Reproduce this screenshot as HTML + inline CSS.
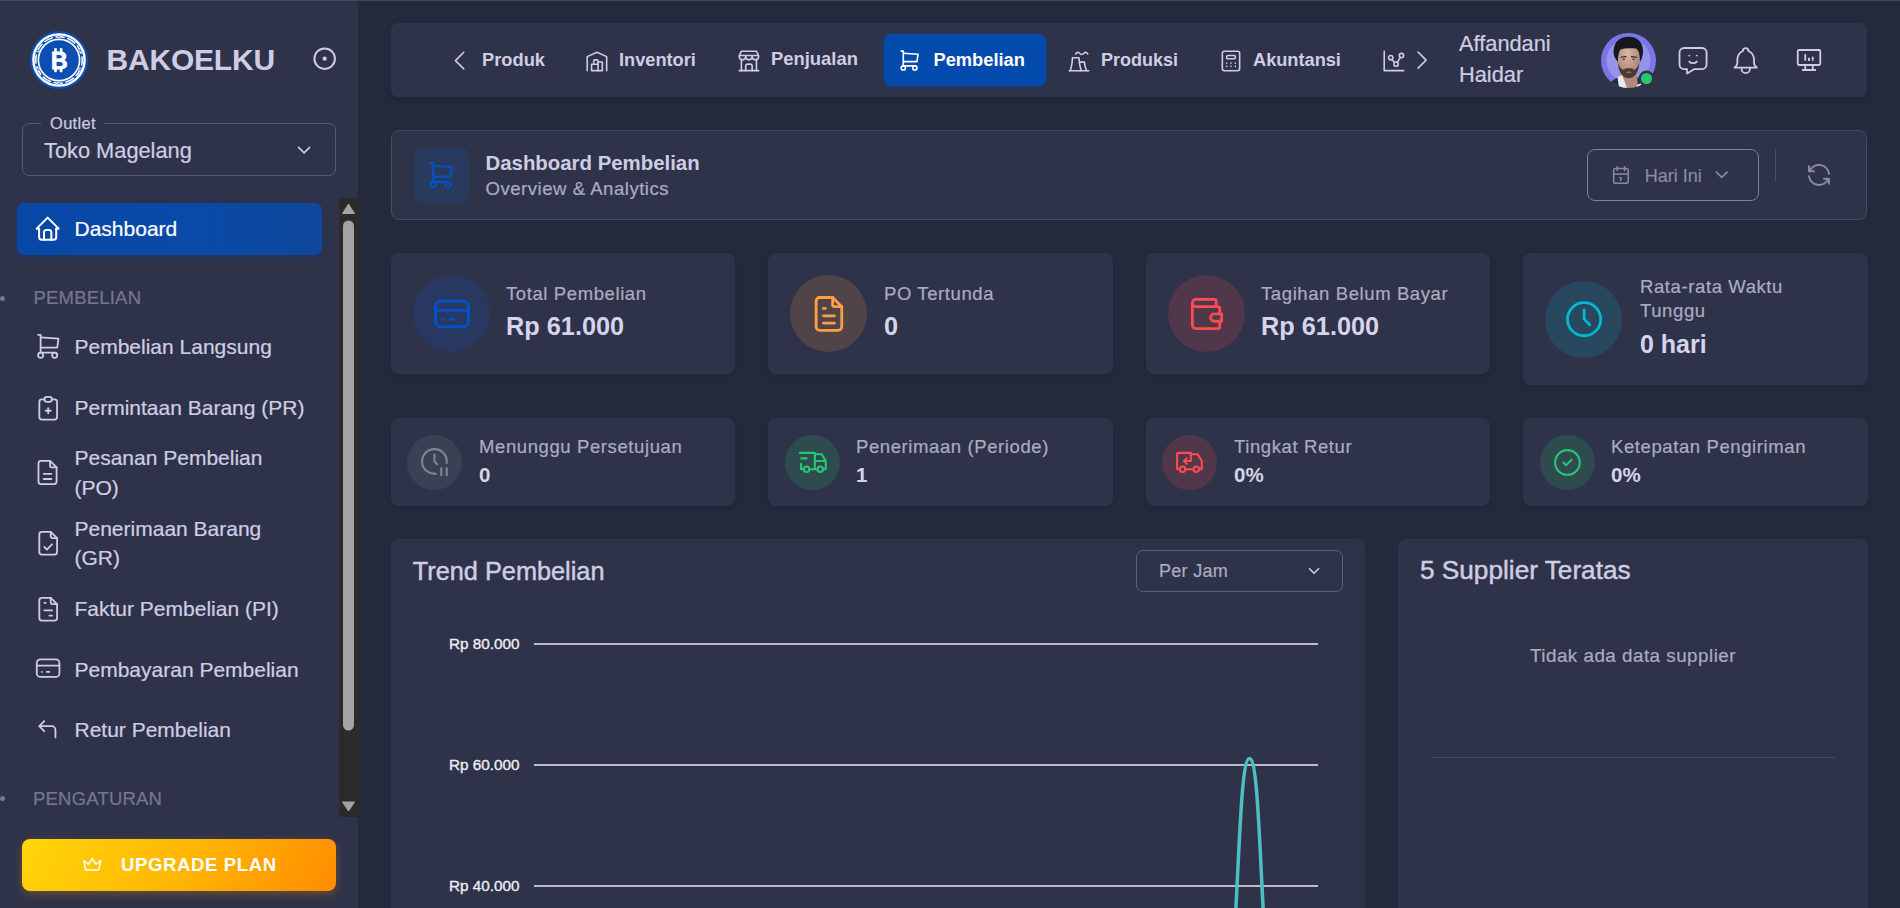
<!DOCTYPE html>
<html><head><meta charset="utf-8"><title>Dashboard Pembelian</title>
<style>
html,body{margin:0;padding:0;width:1900px;height:908px;overflow:hidden;background:#25293c;font-family:"Liberation Sans",sans-serif;}
.b{position:absolute;}
.t{position:absolute;white-space:nowrap;line-height:1;-webkit-text-stroke:0.2px currentColor;}
.ic{position:absolute;overflow:visible;}
</style></head><body>
<div class="b" style="left:0px;top:0px;width:1900px;height:1px;background:#484a47;z-index:5"></div>
<div class="b" style="left:0px;top:1px;width:358px;height:907px;background:#2f3349"></div>
<svg class="ic" style="left:29.8px;top:30.5px;width:58px;height:58px" viewBox="0 0 58 58">
<circle cx="29" cy="29" r="29" fill="#0c4eb3"/>
<circle cx="29" cy="29" r="25.6" fill="none" stroke="#ffffff" stroke-width="2.4"/>
<circle cx="29" cy="29" r="23.2" fill="none" stroke="#ffffff" stroke-width="1.5" stroke-dasharray="9.5 2.6" stroke-dashoffset="4"/>
<circle cx="29" cy="29" r="20.6" fill="none" stroke="#ffffff" stroke-width="1.6"/>
<g fill="#0c4eb3" stroke="#ffffff" stroke-width="0.9"><circle cx="29" cy="5.8" r="1.3"/><circle cx="29" cy="52.2" r="1.3"/><circle cx="7.8" cy="19.6" r="1.3"/><circle cx="50.2" cy="19.6" r="1.3"/><circle cx="7.8" cy="38.4" r="1.3"/><circle cx="50.2" cy="38.4" r="1.3"/></g>
<text x="29.4" y="37.7" text-anchor="middle" font-family="Liberation Sans" font-weight="700" font-size="23" fill="#fff" stroke="#fff" stroke-width="0.9">B</text>
<g fill="#fff"><rect x="24.2" y="17.2" width="2.6" height="4"/><rect x="29.8" y="17.2" width="2.6" height="4"/><rect x="24.2" y="37" width="2.6" height="4.2"/><rect x="29.8" y="37" width="2.6" height="4.2"/></g>
</svg>
<div class="t" style="left:106.50px;top:44.61px;font-size:30px;color:#cfcde4;font-weight:700;-webkit-text-stroke:0;letter-spacing:-0.2px;">BAKOELKU</div>
<svg class="ic" style="left:310.84px;top:45.34px;width:27.33px;height:27.33px;" viewBox="0 0 24 24" fill="none" stroke="#cfcde4" stroke-width="1.756" stroke-linecap="round" stroke-linejoin="round"><path d="M12 12m-1 0a1 1 0 1 0 2 0a1 1 0 1 0 -2 0"/><path d="M12 12m-9 0a9 9 0 1 0 18 0a9 9 0 1 0 -18 0"/></svg>
<div class="b" style="left:22px;top:123px;width:314px;height:53px;border:1px solid #575b76;border-radius:7px;box-sizing:border-box"></div>
<div class="b" style="left:41px;top:118px;width:63px;height:10px;background:#2f3349"></div>
<div class="t" style="left:50.00px;top:115.03px;font-size:16.5px;color:#cfcde4;letter-spacing:0.3px;">Outlet</div>
<div class="t" style="left:44.00px;top:139.55px;font-size:21.8px;color:#cfcde4;">Toko Magelang</div>
<svg class="ic" style="left:293.40px;top:139.40px;width:22.20px;height:22.20px;" viewBox="0 0 24 24" fill="none" stroke="#cfcde4" stroke-width="1.730" stroke-linecap="round" stroke-linejoin="round"><path d="M6 9l6 6l6 -6"/></svg>
<div class="b" style="left:17px;top:203px;width:305px;height:52px;background:linear-gradient(90deg,#0847a6 0%,#0a4aa8 60%,#0e479a 100%);border-radius:7px;box-shadow:0 2px 6px rgba(8,60,150,0.35)"></div>
<svg class="ic" style="left:33.33px;top:214.33px;width:29.33px;height:29.33px;" viewBox="0 0 24 24" fill="none" stroke="#ffffff" stroke-width="1.636" stroke-linecap="round" stroke-linejoin="round"><path d="M5 12l-2 0l9 -9l9 9l-2 0"/><path d="M5 12v7a2 2 0 0 0 2 2h10a2 2 0 0 0 2 -2v-7"/><path d="M9 21v-6a2 2 0 0 1 2 -2h2a2 2 0 0 1 2 2v6"/></svg>
<div class="t" style="left:74.50px;top:218.22px;font-size:21px;color:#ffffff;">Dashboard</div>
<div class="b" style="left:0px;top:296px;width:5px;height:5px;border-radius:50%;background:#76778e"></div>
<div class="t" style="left:33.50px;top:289.34px;font-size:18.5px;color:#76778e;letter-spacing:0.2px;">PEMBELIAN</div>
<svg class="ic" style="left:32.69px;top:331.19px;width:30.62px;height:30.62px;" viewBox="0 0 24 24" fill="none" stroke="#cfcde4" stroke-width="1.411" stroke-linecap="round" stroke-linejoin="round"><path d="M6 19m-2 0a2 2 0 1 0 4 0a2 2 0 1 0 -4 0"/><path d="M17 19m-2 0a2 2 0 1 0 4 0a2 2 0 1 0 -4 0"/><path d="M17 17h-11v-14h-2"/><path d="M6 5l14 1l-1 7h-13"/></svg>
<div class="t" style="left:74.50px;top:336.22px;font-size:21px;color:#cfcde4;">Pembelian Langsung</div>
<svg class="ic" style="left:32.80px;top:392.80px;width:30.40px;height:30.40px;" viewBox="0 0 24 24" fill="none" stroke="#cfcde4" stroke-width="1.421" stroke-linecap="round" stroke-linejoin="round"><path d="M9 5h-2a2 2 0 0 0 -2 2v12a2 2 0 0 0 2 2h10a2 2 0 0 0 2 -2v-12a2 2 0 0 0 -2 -2h-2"/><path d="M9 3m0 2a2 2 0 0 1 2 -2h2a2 2 0 0 1 2 2v0a2 2 0 0 1 -2 2h-2a2 2 0 0 1 -2 -2z"/><path d="M10 14h4"/><path d="M12 12v4"/></svg>
<div class="t" style="left:74.50px;top:397.22px;font-size:21px;color:#cfcde4;">Permintaan Barang (PR)</div>
<svg class="ic" style="left:32.47px;top:456.97px;width:31.07px;height:31.07px;" viewBox="0 0 24 24" fill="none" stroke="#cfcde4" stroke-width="1.391" stroke-linecap="round" stroke-linejoin="round"><path d="M14 3v4a1 1 0 0 0 1 1h4"/><path d="M17 21h-10a2 2 0 0 1 -2 -2v-14a2 2 0 0 1 2 -2h7l5 5v11a2 2 0 0 1 -2 2z"/><path d="M9 17h6"/><path d="M9 13h6"/></svg>
<div class="t" style="left:74.50px;top:446.62px;font-size:21px;color:#cfcde4;">Pesanan Pembelian</div>
<div class="t" style="left:74.50px;top:476.72px;font-size:21px;color:#cfcde4;">(PO)</div>
<svg class="ic" style="left:32.80px;top:527.80px;width:30.40px;height:30.40px;" viewBox="0 0 24 24" fill="none" stroke="#cfcde4" stroke-width="1.421" stroke-linecap="round" stroke-linejoin="round"><path d="M14 3v4a1 1 0 0 0 1 1h4"/><path d="M17 21h-10a2 2 0 0 1 -2 -2v-14a2 2 0 0 1 2 -2h7l5 5v11a2 2 0 0 1 -2 2z"/><path d="M9 15l2 2l4 -4"/></svg>
<div class="t" style="left:74.50px;top:517.52px;font-size:21px;color:#cfcde4;">Penerimaan Barang</div>
<div class="t" style="left:74.50px;top:547.22px;font-size:21px;color:#cfcde4;">(GR)</div>
<svg class="ic" style="left:32.80px;top:593.80px;width:30.40px;height:30.40px;" viewBox="0 0 24 24" fill="none" stroke="#cfcde4" stroke-width="1.421" stroke-linecap="round" stroke-linejoin="round"><path d="M14 3v4a1 1 0 0 0 1 1h4"/><path d="M17 21h-10a2 2 0 0 1 -2 -2v-14a2 2 0 0 1 2 -2h7l5 5v11a2 2 0 0 1 -2 2z"/><path d="M9 7l1 0"/><path d="M9 13l6 0"/><path d="M13 17l2 0"/></svg>
<div class="t" style="left:74.50px;top:597.62px;font-size:21px;color:#cfcde4;">Faktur Pembelian (PI)</div>
<svg class="ic" style="left:32.90px;top:653.40px;width:30.21px;height:30.21px;" viewBox="0 0 24 24" fill="none" stroke="#cfcde4" stroke-width="1.430" stroke-linecap="round" stroke-linejoin="round"><path d="M3 5m0 3a3 3 0 0 1 3 -3h12a3 3 0 0 1 3 3v8a3 3 0 0 1 -3 3h-12a3 3 0 0 1 -3 -3z"/><path d="M3 10l18 0"/><path d="M7 15l.01 0"/><path d="M11 15l2 0"/></svg>
<div class="t" style="left:74.50px;top:658.72px;font-size:21px;color:#cfcde4;">Pembayaran Pembelian</div>
<svg class="ic" style="left:33.17px;top:715.17px;width:29.91px;height:29.91px;" viewBox="0 0 24 24" fill="none" stroke="#cfcde4" stroke-width="1.444" stroke-linecap="round" stroke-linejoin="round"><path d="M18 18v-6a3 3 0 0 0 -3 -3h-10l4 -4m0 8l-4 -4"/></svg>
<div class="t" style="left:74.50px;top:718.62px;font-size:21px;color:#cfcde4;">Retur Pembelian</div>
<div class="b" style="left:0px;top:795.5px;width:5px;height:5px;border-radius:50%;background:#76778e"></div>
<div class="t" style="left:33.00px;top:789.84px;font-size:18.5px;color:#76778e;letter-spacing:0.2px;">PENGATURAN</div>
<div class="b" style="left:339px;top:198px;width:19px;height:619px;background:#2b2b2b"></div>
<svg class="ic" style="left:339px;top:198px;width:19px;height:619px" viewBox="0 0 19 619"><path d="M9.5 6 L15.5 15.5 L3.5 15.5 Z" fill="#a3a3a3" stroke="#a3a3a3" stroke-width="1" stroke-linejoin="round"/><path d="M9.5 613 L15.5 604 L3.5 604 Z" fill="#a3a3a3" stroke="#a3a3a3" stroke-width="1" stroke-linejoin="round"/><rect x="4" y="22.5" width="11" height="510" rx="5.5" fill="#a3a3a3"/></svg>
<div class="b" style="left:22px;top:839px;width:314px;height:52px;background:linear-gradient(120deg,#ffd60a 0%,#ffb703 50%,#ff8c00 100%);border-radius:8px;box-shadow:0 3px 8px rgba(255,150,0,0.28)"></div>
<svg class="ic" style="left:80.75px;top:853.25px;width:22.50px;height:22.50px;" viewBox="0 0 24 24" fill="none" stroke="#ffffff" stroke-width="1.600" stroke-linecap="round" stroke-linejoin="round"><path d="M12 6l4 6l5 -4l-2 10h-14l-2 -10l5 4z"/></svg>
<div class="t" style="left:121.00px;top:855.84px;font-size:18.5px;color:#ffffff;font-weight:700;-webkit-text-stroke:0;letter-spacing:0.65px;">UPGRADE PLAN</div>
<div class="b" style="left:358px;top:1px;width:1542px;height:907px;background:#25293c"></div>
<div class="b" style="left:391px;top:23px;width:1476px;height:74px;background:#2f3349;border-radius:7px;box-shadow:0 2px 8px rgba(0,0,0,0.12)"></div>
<svg class="ic" style="left:442.90px;top:43.90px;width:33.20px;height:33.20px;" viewBox="0 0 24 24" fill="none" stroke="#cfcde4" stroke-width="1.157" stroke-linecap="round" stroke-linejoin="round"><path d="M15 6l-6 6l6 6"/></svg>
<div class="t" style="left:482.00px;top:50.51px;font-size:18.3px;color:#cfcde4;font-weight:700;-webkit-text-stroke:0;">Produk</div>
<svg class="ic" style="left:583.54px;top:47.50px;width:25.92px;height:25.92px;" viewBox="0 0 24 24" fill="none" stroke="#cfcde4" stroke-width="1.481" stroke-linecap="round" stroke-linejoin="round"><path d="M3 21v-13l9 -4l9 4v13"/><path d="M13 13h4v8h-10v-6h6"/><path d="M13 21v-9a1 1 0 0 0 -1 -1h-2a1 1 0 0 0 -1 1v3"/></svg>
<div class="t" style="left:619.00px;top:50.59px;font-size:18.2px;color:#cfcde4;font-weight:700;-webkit-text-stroke:0;">Inventori</div>
<svg class="ic" style="left:735.57px;top:47.57px;width:25.87px;height:25.87px;" viewBox="0 0 24 24" fill="none" stroke="#cfcde4" stroke-width="1.485" stroke-linecap="round" stroke-linejoin="round"><path d="M3 21l18 0"/><path d="M3 7v1a3 3 0 0 0 6 0v-1m0 1a3 3 0 0 0 6 0v-1m0 1a3 3 0 0 0 6 0v-1h-18l2 -4h14l2 4"/><path d="M5 21l0 -10.15"/><path d="M19 21l0 -10.15"/><path d="M9 21v-4a2 2 0 0 1 2 -2h2a2 2 0 0 1 2 2v4"/></svg>
<div class="t" style="left:771.00px;top:50.42px;font-size:18.4px;color:#cfcde4;font-weight:700;-webkit-text-stroke:0;">Penjualan</div>
<div class="b" style="left:884px;top:34px;width:162px;height:52px;background:#044bae;border-radius:7px;box-shadow:0 2px 6px rgba(4,75,174,0.35)"></div>
<svg class="ic" style="left:897.38px;top:47.88px;width:25.23px;height:25.23px;" viewBox="0 0 24 24" fill="none" stroke="#ffffff" stroke-width="1.522" stroke-linecap="round" stroke-linejoin="round"><path d="M6 19m-2 0a2 2 0 1 0 4 0a2 2 0 1 0 -4 0"/><path d="M17 19m-2 0a2 2 0 1 0 4 0a2 2 0 1 0 -4 0"/><path d="M17 17h-11v-14h-2"/><path d="M6 5l14 1l-1 7h-13"/></svg>
<div class="t" style="left:933.50px;top:50.51px;font-size:18.3px;color:#ffffff;font-weight:700;-webkit-text-stroke:0;">Pembelian</div>
<svg class="ic" style="left:1066.05px;top:47.54px;width:26.00px;height:26.00px;" viewBox="0 0 24 24" fill="none" stroke="#cfcde4" stroke-width="1.477" stroke-linecap="round" stroke-linejoin="round"><path d="M4 21c1.147 -4.02 1.983 -8.027 2 -12h6c.017 3.973 .853 7.98 2 12"/><path d="M12.5 13h4.5c.025 2.612 .894 5.296 2 8"/><path d="M9 5.5c.7 -1.4 2 -1.8 2.8 -1.2c.8 .6 1.6 1.7 2.7 1.7s1.9 -1.1 2.7 -1.7c.8 -.6 2.1 -.2 2.8 1.2"/><path d="M3 21l18 0"/></svg>
<div class="t" style="left:1101.00px;top:50.76px;font-size:18.0px;color:#cfcde4;font-weight:700;-webkit-text-stroke:0;">Produksi</div>
<svg class="ic" style="left:1217.51px;top:47.51px;width:25.98px;height:25.98px;" viewBox="0 0 24 24" fill="none" stroke="#cfcde4" stroke-width="1.478" stroke-linecap="round" stroke-linejoin="round"><path d="M4 3m0 2a2 2 0 0 1 2 -2h12a2 2 0 0 1 2 2v14a2 2 0 0 1 -2 2h-12a2 2 0 0 1 -2 -2z"/><path d="M8 7m0 1a1 1 0 0 1 1 -1h6a1 1 0 0 1 1 1v1a1 1 0 0 1 -1 1h-6a1 1 0 0 1 -1 -1z"/><path d="M8 14l0 .01"/><path d="M12 14l0 .01"/><path d="M16 14l0 .01"/><path d="M8 17l0 .01"/><path d="M12 17l0 .01"/><path d="M16 17l0 .01"/></svg>
<div class="t" style="left:1253.00px;top:50.59px;font-size:18.2px;color:#cfcde4;font-weight:700;-webkit-text-stroke:0;">Akuntansi</div>
<svg class="ic" style="left:1380.57px;top:47.57px;width:25.87px;height:25.87px;" viewBox="0 0 24 24" fill="none" stroke="#cfcde4" stroke-width="1.485" stroke-linecap="round" stroke-linejoin="round"><path d="M3 3v18h18"/><path d="M9 9m-2 0a2 2 0 1 0 4 0a2 2 0 1 0 -4 0"/><path d="M19 7m-2 0a2 2 0 1 0 4 0a2 2 0 1 0 -4 0"/><path d="M14 15m-2 0a2 2 0 1 0 4 0a2 2 0 1 0 -4 0"/><path d="M10.16 10.62l2.34 2.88"/><path d="M15.088 13.328l2.837 -4.586"/></svg>
<svg class="ic" style="left:1406.40px;top:44.40px;width:32.20px;height:32.20px;" viewBox="0 0 24 24" fill="none" stroke="#cfcde4" stroke-width="1.193" stroke-linecap="round" stroke-linejoin="round"><path d="M9 6l6 6l-6 6"/></svg>
<div class="t" style="left:1459.00px;top:32.55px;font-size:21.8px;color:#cfcde4;">Affandani</div>
<div class="t" style="left:1459.00px;top:63.55px;font-size:21.8px;color:#cfcde4;">Haidar</div>
<svg class="ic" style="left:1601px;top:33px;width:55px;height:55px" viewBox="0 0 55 55">
<defs><clipPath id="av"><circle cx="27.5" cy="27.5" r="27.5"/></clipPath>
<radialGradient id="sk" cx="0.45" cy="0.35" r="0.7"><stop offset="0" stop-color="#d9b6a6"/><stop offset="0.7" stop-color="#b58d7c"/><stop offset="1" stop-color="#8c6a5e"/></radialGradient></defs>
<g clip-path="url(#av)">
<rect width="55" height="55" fill="#7a76e6"/>
<circle cx="27.5" cy="27.5" r="22" fill="#9593ec"/>
<path d="M7 55 C9 48 14 45.5 19 44 L36 44 C40 46 41 50 42 55 Z" fill="#1f2a44"/>
<path d="M19 41 L36 41 L37 55 L20 55 Z" fill="#b08a7c"/>
<path d="M16.5 44 L21 42 L26 55 L18 55 Z" fill="#e6ebf0"/>
<path d="M36 52 L40 50 L41 55 L36 55 Z" fill="#e6ebf0"/>
<path d="M16.5 20 C16.5 11 21 7.5 27.5 7.5 C34 7.5 39 11 39 21 L38.5 31 C37.5 40 33 45 27.5 45 C22 45 17.5 40 16.8 31 Z" fill="url(#sk)"/>
<path d="M17 30 C17.5 39 22 45.3 27.8 45.3 C33.5 45.3 37.8 39 38.3 30 C37 34 35 36.5 33 36.8 C31 35.2 29 35 27.8 35.6 C26.5 35 24.5 35.2 22.5 36.8 C20.5 36.5 18.5 34 17 30 Z" fill="#4a3a33"/>
<path d="M24.5 39.2 C26.5 38.3 29 38.3 31 39.2 C29 40.3 26.5 40.3 24.5 39.2 Z" fill="#9c7567"/>
<path d="M12.5 19 C12.5 9 19 3.5 28 3.8 C36 4 42.5 9 42 19 C41.5 24 40.5 27 39 29 C39 22 38 17 35 15.5 C30 15 23 15 19.5 16.5 C17.5 19 17 24 17 29 C14.5 26 12.5 23 12.5 19 Z" fill="#18171d"/>
<path d="M20 24.2 L25 23.6 M30.5 23.6 L35.5 24.2" stroke="#2a211f" stroke-width="1.1" stroke-linecap="round"/>
<ellipse cx="22.8" cy="26.3" rx="1.4" ry="0.8" fill="#3a4250"/>
<ellipse cx="32.6" cy="26.3" rx="1.4" ry="0.8" fill="#3a4250"/>
</g>
<circle cx="45.5" cy="45.5" r="7.9" fill="#2f3349"/>
<circle cx="45.5" cy="45.5" r="5.5" fill="#28c76f"/>
</svg>
<svg class="ic" style="left:1675.46px;top:42.11px;width:36.08px;height:36.08px;" viewBox="0 0 24 24" fill="none" stroke="#cfcde4" stroke-width="1.197" stroke-linecap="round" stroke-linejoin="round"><path d="M18 4a3 3 0 0 1 3 3v8a3 3 0 0 1 -3 3h-5l-5 3v-3h-2a3 3 0 0 1 -3 -3v-8a3 3 0 0 1 3 -3h12z"/><path d="M9.5 9h.01"/><path d="M14.5 9h.01"/><path d="M9.5 13a3.5 3.5 0 0 0 5 0"/></svg>
<svg class="ic" style="left:1728.71px;top:43.86px;width:33.38px;height:33.38px;" viewBox="0 0 24 24" fill="none" stroke="#cfcde4" stroke-width="1.294" stroke-linecap="round" stroke-linejoin="round"><path d="M10 5a2 2 0 1 1 4 0a7 7 0 0 1 4 6v3a4 4 0 0 0 2 3h-16a4 4 0 0 0 2 -3v-3a7 7 0 0 1 4 -6"/><path d="M9 17v1a3 3 0 0 0 6 0v-1"/></svg>
<svg class="ic" style="left:1793.84px;top:44.99px;width:30.02px;height:30.02px;" viewBox="0 0 24 24" fill="none" stroke="#cfcde4" stroke-width="1.439" stroke-linecap="round" stroke-linejoin="round"><path d="M3 4m0 1a1 1 0 0 1 1 -1h16a1 1 0 0 1 1 1v10a1 1 0 0 1 -1 1h-16a1 1 0 0 1 -1 -1z"/><path d="M7 20h10"/><path d="M9 16v4"/><path d="M15 16v4"/><path d="M9 12v-4"/><path d="M12 12v-1"/><path d="M15 12v-2"/><path d="M12 12v-1"/></svg>
<div class="b" style="left:391px;top:130px;width:1476px;height:90px;background:#2f3349;border:1px solid #464a66;border-radius:8px;box-sizing:border-box"></div>
<div class="b" style="left:414px;top:148px;width:55px;height:55px;background:#283a5e;border-radius:8px"></div>
<svg class="ic" style="left:425.28px;top:159.03px;width:32.54px;height:32.54px;" viewBox="0 0 24 24" fill="none" stroke="#0650c2" stroke-width="1.623" stroke-linecap="round" stroke-linejoin="round"><path d="M6 19m-2 0a2 2 0 1 0 4 0a2 2 0 1 0 -4 0"/><path d="M17 19m-2 0a2 2 0 1 0 4 0a2 2 0 1 0 -4 0"/><path d="M17 17h-11v-14h-2"/><path d="M6 5l14 1l-1 7h-13"/></svg>
<div class="t" style="left:485.50px;top:152.73px;font-size:20.4px;color:#cfcde4;font-weight:700;-webkit-text-stroke:0;">Dashboard Pembelian</div>
<div class="t" style="left:485.50px;top:180.06px;font-size:18.6px;color:#acabc1;letter-spacing:0.5px;">Overview &amp; Analytics</div>
<div class="b" style="left:1587px;top:149px;width:172px;height:52px;border:1.5px solid #7f8196;border-radius:8px;box-sizing:border-box"></div>
<svg class="ic" style="left:1610.06px;top:164.06px;width:21.88px;height:21.88px;" viewBox="0 0 24 24" fill="none" stroke="#8a8b9e" stroke-width="1.646" stroke-linecap="round" stroke-linejoin="round"><path d="M4 7a2 2 0 0 1 2 -2h12a2 2 0 0 1 2 2v12a2 2 0 0 1 -2 2h-12a2 2 0 0 1 -2 -2v-12z"/><path d="M16 3v4"/><path d="M8 3v4"/><path d="M4 11h16"/><path d="M11 15h1"/><path d="M12 15v3"/></svg>
<div class="t" style="left:1644.70px;top:166.96px;font-size:18px;color:#8a8b9e;">Hari Ini</div>
<svg class="ic" style="left:1711.20px;top:164.20px;width:21.50px;height:21.50px;" viewBox="0 0 24 24" fill="none" stroke="#8a8b9e" stroke-width="1.786" stroke-linecap="round" stroke-linejoin="round"><path d="M6 9l6 6l6 -6"/></svg>
<div class="b" style="left:1775px;top:149px;width:1px;height:33px;background:#4a4e68"></div>
<svg class="ic" style="left:1803.97px;top:160.02px;width:29.95px;height:29.95px;" viewBox="0 0 24 24" fill="none" stroke="#8a8b9e" stroke-width="1.603" stroke-linecap="round" stroke-linejoin="round"><path d="M20 11a8.1 8.1 0 0 0 -15.5 -2m-.5 -4v4h4"/><path d="M4 13a8.1 8.1 0 0 0 15.5 2m.5 4v-4h-4"/></svg>
<div class="b" style="left:391px;top:253px;width:344px;height:121px;background:#2f3349;border-radius:8px;box-shadow:0 2px 6px rgba(0,0,0,0.10)"></div>
<div class="b" style="left:413.0px;top:275.0px;width:77px;height:77px;border-radius:50%;background:#283860"></div>
<svg class="ic" style="left:429.54px;top:291.54px;width:43.92px;height:43.92px;" viewBox="0 0 24 24" fill="none" stroke="#0052c8" stroke-width="1.530" stroke-linecap="round" stroke-linejoin="round"><path d="M3 5m0 3a3 3 0 0 1 3 -3h12a3 3 0 0 1 3 3v8a3 3 0 0 1 -3 3h-12a3 3 0 0 1 -3 -3z"/><path d="M3 10l18 0"/><path d="M7 15l.01 0"/><path d="M11 15l2 0"/></svg>
<div class="t" style="left:506.00px;top:285.34px;font-size:18.5px;color:#acabc1;letter-spacing:0.6px;">Total Pembelian</div>
<div class="t" style="left:506.00px;top:313.58px;font-size:25.3px;color:#d6d4ec;font-weight:700;-webkit-text-stroke:0;">Rp 61.000</div>
<div class="b" style="left:768px;top:253px;width:345px;height:121px;background:#2f3349;border-radius:8px;box-shadow:0 2px 6px rgba(0,0,0,0.10)"></div>
<div class="b" style="left:790.0px;top:275.0px;width:77px;height:77px;border-radius:50%;background:#504448"></div>
<svg class="ic" style="left:806.54px;top:291.54px;width:43.92px;height:43.92px;" viewBox="0 0 24 24" fill="none" stroke="#ff9f43" stroke-width="1.530" stroke-linecap="round" stroke-linejoin="round"><path d="M14 3v4a1 1 0 0 0 1 1h4"/><path d="M17 21h-10a2 2 0 0 1 -2 -2v-14a2 2 0 0 1 2 -2h7l5 5v11a2 2 0 0 1 -2 2z"/><path d="M9 9l1 0"/><path d="M9 13l6 0"/><path d="M9 17l6 0"/></svg>
<div class="t" style="left:884.00px;top:285.34px;font-size:18.5px;color:#acabc1;letter-spacing:0.6px;">PO Tertunda</div>
<div class="t" style="left:884.00px;top:313.58px;font-size:25.3px;color:#d6d4ec;font-weight:700;-webkit-text-stroke:0;">0</div>
<div class="b" style="left:1146px;top:253px;width:344px;height:121px;background:#2f3349;border-radius:8px;box-shadow:0 2px 6px rgba(0,0,0,0.10)"></div>
<div class="b" style="left:1168.0px;top:275.0px;width:77px;height:77px;border-radius:50%;background:#50374a"></div>
<svg class="ic" style="left:1184.54px;top:291.54px;width:43.92px;height:43.92px;" viewBox="0 0 24 24" fill="none" stroke="#ff4c51" stroke-width="1.530" stroke-linecap="round" stroke-linejoin="round"><path d="M17 8v-3a1 1 0 0 0 -1 -1h-10a2 2 0 0 0 0 4h12a1 1 0 0 1 1 1v3m0 4v3a1 1 0 0 1 -1 1h-12a2 2 0 0 1 -2 -2v-12"/><path d="M20 12v4h-4a2 2 0 0 1 0 -4h4"/></svg>
<div class="t" style="left:1261.00px;top:285.34px;font-size:18.5px;color:#acabc1;letter-spacing:0.6px;">Tagihan Belum Bayar</div>
<div class="t" style="left:1261.00px;top:313.58px;font-size:25.3px;color:#d6d4ec;font-weight:700;-webkit-text-stroke:0;">Rp 61.000</div>
<div class="b" style="left:1523px;top:253px;width:345px;height:132px;background:#2f3349;border-radius:8px;box-shadow:0 2px 6px rgba(0,0,0,0.10)"></div>
<div class="b" style="left:1545px;top:281px;width:77px;height:77px;border-radius:50%;background:#27485f"></div>
<svg class="ic" style="left:1561.87px;top:297.36px;width:44.27px;height:44.27px;" viewBox="0 0 24 24" fill="none" stroke="#00bad1" stroke-width="1.518" stroke-linecap="round" stroke-linejoin="round"><path d="M3 12a9 9 0 1 0 18 0a9 9 0 0 0 -18 0"/><path d="M12 7v5l3 3"/></svg>
<div class="t" style="left:1640.00px;top:277.74px;font-size:18.5px;color:#acabc1;letter-spacing:0.6px;">Rata-rata Waktu</div>
<div class="t" style="left:1640.00px;top:302.34px;font-size:18.5px;color:#acabc1;letter-spacing:0.6px;">Tunggu</div>
<div class="t" style="left:1640.00px;top:332.04px;font-size:25px;color:#d6d4ec;font-weight:700;-webkit-text-stroke:0;">0 hari</div>
<div class="b" style="left:391px;top:418px;width:344px;height:88px;background:#2f3349;border-radius:8px;box-shadow:0 2px 6px rgba(0,0,0,0.10)"></div>
<div class="b" style="left:407.0px;top:435.0px;width:55px;height:55px;border-radius:50%;background:#3c4054"></div>
<svg class="ic" style="left:418.06px;top:445.38px;width:32.88px;height:32.88px;" viewBox="0 0 24 24" fill="none" stroke="#808390" stroke-width="1.533" stroke-linecap="round" stroke-linejoin="round"><path d="M20.942 13.018a9 9 0 1 0 -7.909 7.922"/><path d="M12 7v5l2 2"/><path d="M17 17v5"/><path d="M21 17v5"/></svg>
<div class="t" style="left:479.00px;top:437.74px;font-size:18.5px;color:#acabc1;letter-spacing:0.6px;">Menunggu Persetujuan</div>
<div class="t" style="left:479.00px;top:464.65px;font-size:20.5px;color:#d6d4ec;font-weight:700;-webkit-text-stroke:0;">0</div>
<div class="b" style="left:768px;top:418px;width:345px;height:88px;background:#2f3349;border-radius:8px;box-shadow:0 2px 6px rgba(0,0,0,0.10)"></div>
<div class="b" style="left:785.0px;top:435.0px;width:55px;height:55px;border-radius:50%;background:#2e4b4f"></div>
<svg class="ic" style="left:796.75px;top:446.06px;width:32.88px;height:32.88px;" viewBox="0 0 24 24" fill="none" stroke="#28c76f" stroke-width="1.533" stroke-linecap="round" stroke-linejoin="round"><path d="M7 17m-2 0a2 2 0 1 0 4 0a2 2 0 1 0 -4 0"/><path d="M17 17m-2 0a2 2 0 1 0 4 0a2 2 0 1 0 -4 0"/><path d="M5 17h-2v-4m-1 -8h11v12m-4 0h6m4 0h2v-6h-8m0 -5h5l3 5"/><path d="M3 9l4 0"/></svg>
<div class="t" style="left:856.00px;top:437.74px;font-size:18.5px;color:#acabc1;letter-spacing:0.6px;">Penerimaan (Periode)</div>
<div class="t" style="left:856.00px;top:464.65px;font-size:20.5px;color:#d6d4ec;font-weight:700;-webkit-text-stroke:0;">1</div>
<div class="b" style="left:1146px;top:418px;width:344px;height:88px;background:#2f3349;border-radius:8px;box-shadow:0 2px 6px rgba(0,0,0,0.10)"></div>
<div class="b" style="left:1162.0px;top:435.0px;width:55px;height:55px;border-radius:50%;background:#50374a"></div>
<svg class="ic" style="left:1173.06px;top:446.06px;width:32.88px;height:32.88px;" viewBox="0 0 24 24" fill="none" stroke="#ff4c51" stroke-width="1.533" stroke-linecap="round" stroke-linejoin="round"><path d="M7 17m-2 0a2 2 0 1 0 4 0a2 2 0 1 0 -4 0"/><path d="M17 17m-2 0a2 2 0 1 0 4 0a2 2 0 1 0 -4 0"/><path d="M5 17h-2v-11a1 1 0 0 1 1 -1h9v6h-5l2 2m0 -4l-2 2"/><path d="M9 17l6 0"/><path d="M13 6h5l3 5v6h-2"/></svg>
<div class="t" style="left:1234.00px;top:437.74px;font-size:18.5px;color:#acabc1;letter-spacing:0.6px;">Tingkat Retur</div>
<div class="t" style="left:1234.00px;top:464.65px;font-size:20.5px;color:#d6d4ec;font-weight:700;-webkit-text-stroke:0;">0%</div>
<div class="b" style="left:1523px;top:418px;width:345px;height:88px;background:#2f3349;border-radius:8px;box-shadow:0 2px 6px rgba(0,0,0,0.10)"></div>
<div class="b" style="left:1540.0px;top:435.0px;width:55px;height:55px;border-radius:50%;background:#2e4b4f"></div>
<svg class="ic" style="left:1551.06px;top:446.06px;width:32.88px;height:32.88px;" viewBox="0 0 24 24" fill="none" stroke="#28c76f" stroke-width="1.533" stroke-linecap="round" stroke-linejoin="round"><path d="M12 12m-9 0a9 9 0 1 0 18 0a9 9 0 1 0 -18 0"/><path d="M9 12l2 2l4 -4"/></svg>
<div class="t" style="left:1611.00px;top:437.74px;font-size:18.5px;color:#acabc1;letter-spacing:0.6px;">Ketepatan Pengiriman</div>
<div class="t" style="left:1611.00px;top:464.65px;font-size:20.5px;color:#d6d4ec;font-weight:700;-webkit-text-stroke:0;">0%</div>
<div class="b" style="left:391px;top:539px;width:974px;height:391px;background:#2f3349;border-radius:8px"></div>
<div class="t" style="left:412.80px;top:558.58px;font-size:25.3px;color:#cfcde4;-webkit-text-stroke:0.45px #cfcde4;">Trend Pembelian</div>
<div class="b" style="left:1136px;top:550px;width:207px;height:42px;border:1px solid #5d607a;border-radius:7px;box-sizing:border-box"></div>
<div class="t" style="left:1159.00px;top:562.06px;font-size:18px;color:#acabc1;letter-spacing:0.3px;">Per Jam</div>
<svg class="ic" style="left:1304.90px;top:561.90px;width:18.10px;height:18.10px;" viewBox="0 0 24 24" fill="none" stroke="#cfcde4" stroke-width="2.122" stroke-linecap="round" stroke-linejoin="round"><path d="M6 9l6 6l6 -6"/></svg>
<div class="t" style="right:1380.50px;top:636.45px;font-size:15.3px;color:#eeedf4;-webkit-text-stroke:0.35px #eeedf4;">Rp 80.000</div>
<div class="b" style="left:534px;top:643.4px;width:784px;height:2.0px;background:#bdbcc6"></div>
<div class="t" style="right:1380.50px;top:756.85px;font-size:15.3px;color:#eeedf4;-webkit-text-stroke:0.35px #eeedf4;">Rp 60.000</div>
<div class="b" style="left:534px;top:763.8px;width:784px;height:2.0px;background:#bdbcc6"></div>
<div class="t" style="right:1380.50px;top:877.55px;font-size:15.3px;color:#eeedf4;-webkit-text-stroke:0.35px #eeedf4;">Rp 40.000</div>
<div class="b" style="left:534px;top:884.5px;width:784px;height:2.0px;background:#bdbcc6"></div>
<svg class="ic" style="left:0;top:0;width:1900px;height:908px" viewBox="0 0 1900 908"><path d="M1181.3 1127.5 C1190 1127.5 1206 1127.5 1215.4 1127.5 C1240.4 992.3 1235.9 758.4 1249.5 758.4 C1263.1 758.4 1258.6 992.3 1283.6 1127.5" fill="none" stroke="#4bc0c0" stroke-width="3.5"/></svg>
<div class="b" style="left:1398px;top:539px;width:470px;height:391px;background:#2f3349;border-radius:8px"></div>
<div class="t" style="left:1420.00px;top:557.02px;font-size:26.2px;color:#cfcde4;-webkit-text-stroke:0.45px #cfcde4;">5 Supplier Teratas</div>
<div class="t" style="left:1530.00px;top:647.09px;font-size:18.8px;color:#acabc1;letter-spacing:0.5px;">Tidak ada data supplier</div>
<div class="b" style="left:1431px;top:757px;width:404px;height:1px;background:#434968"></div>
</body></html>
